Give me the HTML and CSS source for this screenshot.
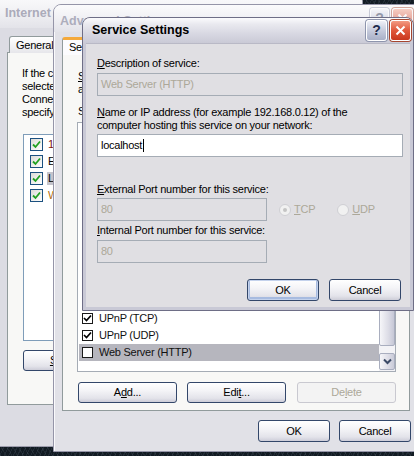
FILE: index.html
```html
<!DOCTYPE html>
<html lang="en">
<head>
<meta charset="utf-8">
<title>Service Settings</title>
<link rel="stylesheet" href="styles.css">
</head>
<body>
<div class="desk">

  <section class="win w1">
    <header class="tbar">
      <span class="ttl">Internet Gateway Properties</span>
    </header>
    <div class="wbody">
      <div class="tabs"><span class="tab">General</span></div>
      <div class="panel p1">
        <p class="txt">If the computer that hosts the gateway is running<br>selected services, Internet users can access them through the<br>Connection. Select the services or click Settings to<br>specify a custom service.</p>
        <div class="list1">
          <div class="r1"><span class="lchk"><svg width="9" height="9" viewBox="0 0 9 9"><path d="M1 4.5 L3.5 7 L8 1.5" fill="none" stroke="#21a121" stroke-width="1.8"/></svg></span><span class="l1 red">1394 Connection</span></div>
          <div class="r1"><span class="lchk"><svg width="9" height="9" viewBox="0 0 9 9"><path d="M1 4.5 L3.5 7 L8 1.5" fill="none" stroke="#21a121" stroke-width="1.8"/></svg></span><span class="l1">Ethernet Adapter</span></div>
          <div class="r1"><span class="lchk"><svg width="9" height="9" viewBox="0 0 9 9"><path d="M1 4.5 L3.5 7 L8 1.5" fill="none" stroke="#21a121" stroke-width="1.8"/></svg></span><span class="l1 hl">Local Area Connection</span></div>
          <div class="r1"><span class="lchk"><svg width="9" height="9" viewBox="0 0 9 9"><path d="M1 4.5 L3.5 7 L8 1.5" fill="none" stroke="#21a121" stroke-width="1.8"/></svg></span><span class="l1 org">Wireless Network Connection</span></div>
        </div>
        <div class="brow1"><button class="btn b1"><u>S</u>ettings...</button></div>
      </div>
    </div>
  </section>

  <section class="win w2">
    <header class="tbar">
      <span class="ttl">Advanced Settings</span>
      <span class="tbtns"><span class="tb help">?</span><span class="tb close"><svg width="11" height="11" viewBox="0 0 11 11"><path d="M1.5 1.5 L9.5 9.5 M9.5 1.5 L1.5 9.5" stroke="#fff" stroke-width="2"/></svg></span></span>
    </header>
    <div class="wbody">
      <div class="tabs"><span class="tab sel">Services</span></div>
      <div class="panel p2">
        <p class="txt"><u>S</u>elect the services running on your network that Internet users can<br>access.</p>
        <p class="txt svc">Services</p>
        <div class="list2">
          <div class="rows">
            <div class="r2"><span class="chk"><svg width="9" height="9" viewBox="0 0 9 9"><path d="M1 4 L3.5 6.5 L8 1.5" fill="none" stroke="#000" stroke-width="1.7"/></svg></span><span>FTP Server</span></div>
            <div class="r2"><span class="chk"></span><span>Internet Mail Access Protocol Version 3 (IMAP3)</span></div>
            <div class="r2"><span class="chk"></span><span>Internet Mail Access Protocol Version 4 (IMAP4)</span></div>
            <div class="r2"><span class="chk"></span><span>Internet Mail Server (SMTP)</span></div>
            <div class="r2"><span class="chk"></span><span>Post-Office Protocol Version 3 (POP3)</span></div>
            <div class="r2"><span class="chk"><svg width="9" height="9" viewBox="0 0 9 9"><path d="M1 4 L3.5 6.5 L8 1.5" fill="none" stroke="#000" stroke-width="1.7"/></svg></span><span>msmsgs (192.168.0.2:6891) TCP</span></div>
            <div class="r2"><span class="chk"><svg width="9" height="9" viewBox="0 0 9 9"><path d="M1 4 L3.5 6.5 L8 1.5" fill="none" stroke="#000" stroke-width="1.7"/></svg></span><span>msmsgs (192.168.0.2:7421) UDP</span></div>
            <div class="r2"><span class="chk"></span><span>Remote Desktop</span></div>
            <div class="r2"><span class="chk"></span><span>Secure Web Server (HTTPS)</span></div>
            <div class="r2"><span class="chk"></span><span>Telnet Server</span></div>
            <div class="r2"><span class="chk"></span><span>Terminal Services</span></div>
            <div class="r2"><span class="chk"><svg width="9" height="9" viewBox="0 0 9 9"><path d="M1 4 L3.5 6.5 L8 1.5" fill="none" stroke="#000" stroke-width="1.7"/></svg></span><span>UPnP (TCP)</span></div>
            <div class="r2"><span class="chk"><svg width="9" height="9" viewBox="0 0 9 9"><path d="M1 4 L3.5 6.5 L8 1.5" fill="none" stroke="#000" stroke-width="1.7"/></svg></span><span>UPnP (UDP)</span></div>
            <div class="r2 hl2"><span class="chk"></span><span>Web Server (HTTP)</span></div>
          </div>
          <div class="vscroll">
            <div class="thumb"></div>
            <div class="arrow"><svg width="9" height="7" viewBox="0 0 9 7"><path d="M1 1.5 L4.5 5 L8 1.5" fill="none" stroke="#3b4a66" stroke-width="2"/></svg></div>
          </div>
        </div>
        <div class="brow2">
          <button class="btn b2">A<u>d</u>d...</button>
          <button class="btn b2">Edi<u>t</u>...</button>
          <button class="btn b2 del" disabled>De<u>l</u>ete</button>
        </div>
      </div>
      <div class="brow3">
        <button class="btn b3">OK</button>
        <button class="btn b3">Cancel</button>
      </div>
    </div>
  </section>

  <section class="win w3">
    <header class="tbar">
      <span class="ttl">Service Settings</span>
      <span class="tbtns"><span class="tb help">?</span><span class="tb close"><svg width="11" height="11" viewBox="0 0 11 11"><path d="M1.5 1.5 L9.5 9.5 M9.5 1.5 L1.5 9.5" stroke="#fff" stroke-width="2"/></svg></span></span>
    </header>
    <div class="wbody dlg">
      <p class="lbl"><u>D</u>escription of service:</p>
      <div class="field dis wide f1">Web Server (HTTP)</div>
      <p class="lbl l2"><u>N</u>ame or IP address (for example 192.168.0.12) of the<br>computer hosting this service on your network:</p>
      <div class="field wide f2">localhost<span class="caret"></span></div>
      <p class="lbl l3"><u>E</u>xternal Port number for this service:</p>
      <div class="portrow">
        <div class="field dis short">80</div>
        <div class="radios">
          <span class="radio"><span class="rc on"></span><span class="rt"><u>T</u>CP</span></span>
          <span class="radio"><span class="rc"></span><span class="rt"><u>U</u>DP</span></span>
        </div>
      </div>
      <p class="lbl l4"><u>I</u>nternal Port number for this service:</p>
      <div class="field dis short f4">80</div>
      <div class="brow4">
        <button class="btn b3 def">OK</button>
        <button class="btn b3">Cancel</button>
      </div>
    </div>
  </section>

</div>
</body>
</html>
```
FILE: styles.css
```css
* { box-sizing: border-box; margin: 0; padding: 0; }
html, body { margin: 0; padding: 0; }
body {
  width: 414px; height: 456px; overflow: hidden;
  font-family: "Liberation Sans", Arial, sans-serif;
  font-size: 11px; letter-spacing: -0.25px; line-height: 13px; color: #000;
}
u { text-decoration: underline; text-underline-offset: 1px; }

.desk {
  position: relative; width: 414px; height: 456px; overflow: hidden;
  background-color: #121b23;
  background-image:
    repeating-linear-gradient(115deg, rgba(120,140,160,.14) 0 1px, transparent 1px 4px),
    repeating-linear-gradient(60deg, rgba(200,210,220,.08) 0 1px, transparent 1px 5px);
}

.win { position: absolute; display: flex; flex-direction: column; overflow: hidden; }
.tbar { flex: none; display: flex; align-items: center; justify-content: space-between; }
.ttl { font-weight: bold; font-size: 12.5px; letter-spacing: 0; white-space: nowrap; }
.tbtns { display: flex; gap: 3px; }
.tb {
  width: 21px; height: 21px; border-radius: 3px; border: 1px solid #fff;
  display: flex; align-items: center; justify-content: center;
}
.tb.help {
  background: linear-gradient(#eef0f7, #c3c8da 55%, #a9b0c7);
  color: #1f2d4d; font-weight: bold; font-size: 14px; letter-spacing: 0;
  box-shadow: 0 0 0 1px #8e95ad;
}
.tb.close {
  background: linear-gradient(#f29a82, #e0573a 50%, #c9371d);
  box-shadow: 0 0 0 1px #a6462f;
}
.wbody { flex: 1; display: flex; flex-direction: column; min-height: 0; }

.tabs { display: flex; height: 17px; position: relative; z-index: 1; flex: none; }
.tab {
  display: flex; align-items: center; padding: 0 6px; white-space: nowrap;
  border: 1px solid #919b9c; border-bottom: 0; border-radius: 3px 3px 0 0;
  background: linear-gradient(#ffffff, #f1f1f3 60%, #e6e6ea);
}
.tab.sel {
  background: #fcfcfe; border-top: 3px solid #f4a93b; height: 18px;
  margin-top: -1px;
}
.panel {
  flex: none; border: 1px solid #919b9c; background: #f8f8f6; margin-top: -1px;
  display: flex; flex-direction: column; align-items: flex-start;
}
.txt { white-space: nowrap; }

/* window 1 (back) */
.w1 {
  z-index: 1;
  left: -4px; top: -6px; width: 367px; height: 453px;
  border: 1px solid #9c9cac; border-radius: 0 8px 0 0; background: #dcdce3;
}
.w1 .tbar { height: 33px; padding: 4px 0 0 8px; background: linear-gradient(#fbfbfc, #f0f0f3 55%, #e3e3e9); }
.w1 .ttl { color: #ababba; }
.w1 .wbody { padding: 8px 0 0 10px; }
.w1 .tabs { padding-left: 2px; }
.p1 { width: 350px; height: 353px; padding: 14px 0 0 14px; }
.list1 {
  margin-top: 15px; margin-left: 1px; width: 320px; height: 207px;
  border: 1px solid #7f9db9; background: #fff; padding: 1px 0 0 6px;
}
.r1 { height: 17px; display: flex; align-items: center; gap: 4px; white-space: nowrap; }
.lchk {
  width: 13px; height: 13px; border: 1px solid #1c5180; flex: none;
  background: linear-gradient(135deg, #dcdcd7, #ffffff);
  display: flex; align-items: center; justify-content: center;
}
.l1 { padding: 0 1px; }
.l1.red { color: #7a1010; }
.l1.org { color: #b8700c; }
.l1.hl { background: #c4c4cc; }
.brow1 { margin-top: 9px; margin-left: 1px; }
.b1 { width: 100px; }

/* buttons */
.btn {
  font: inherit; letter-spacing: inherit; color: #000; height: 21px;
  border: 1px solid #33476a; border-radius: 3px;
  background: linear-gradient(#ffffff, #f4f4f7 40%, #e3e3ea 80%, #cdcdd8);
  display: flex; align-items: center; justify-content: center; flex: none;
}
.btn.def { box-shadow: inset 0 0 0 1px #c4d2ec, inset 0 -1px 0 2px #a7bbe0; }
.btn:disabled {
  border-color: #c9c9d0; color: #aca899;
  background: #f3f3f3;
}

/* window 2 (middle) */
.w2 {
  z-index: 2;
  left: 53px; top: 4px; width: 372px; height: 448px;
  border: 1px solid #9595a8; border-radius: 8px 8px 0 0; background: #e1e1e7;
  box-shadow: inset 1px 0 0 #fafafc;
}
.w2 .tbar { height: 27px; padding: 0 11px 0 6px; background: linear-gradient(#fbfbfc, #efeff3 55%, #e3e3e9); }
.w2 .ttl { color: #adadbc; margin-top: 5px; }
.w2 .tb { opacity: .45; }
.w2 .tb.help { width: 19px; }
.w2 .wbody { padding: 6px 12px 0 8px; }
.p2 { width: 348px; height: 357px; padding: 15px 0 0 14px; }
.p2 .txt { margin-left: 1px; }
.p2 .svc { margin-top: 9px; }
.list2 {
  margin-top: 4px; width: 319px; height: 250px;
  border: 1px solid #a5acb5; background: #fff; display: flex;
}
.rows { flex: 1; overflow: hidden; padding-left: 1px; }
.r2 { height: 17px; display: flex; align-items: center; gap: 6px; padding-left: 3px; white-space: nowrap; color: #111; }
.r2.hl2 { background: #b6b6be; }
.chk {
  width: 11px; height: 11px; border: 1px solid #1a1a1a; background: #fff; flex: none;
  display: flex; align-items: center; justify-content: center;
}
.vscroll {
  width: 16px; flex: none; display: flex; flex-direction: column;
  background: #f3f3f6; padding: 0 0 1px 0; gap: 7px;
}
.thumb {
  flex: 1; margin-top: 26px; border: 1px solid #a9aebf; border-radius: 2px;
  background: linear-gradient(90deg, #f6f6f9, #dcdce6 60%, #c6c8d6);
}
.arrow {
  height: 17px; border: 1px solid #a9aebf; border-radius: 2px;
  background: linear-gradient(90deg, #f6f6f9, #dcdce6 60%, #c9cbd8);
  display: flex; align-items: center; justify-content: center;
}
.brow2 { margin-top: 10px; margin-left: 1px; display: flex; gap: 10px; }
.b2 { width: 99px; }
.b2.del { margin-left: 1px; }
.brow3 { margin-top: 9px; display: flex; justify-content: flex-end; gap: 9px; padding-right: 1px; }
.b3 { width: 72px; height: 22px; }

/* window 3 (front dialog) */
.w3 {
  z-index: 3;
  left: 82px; top: 17px; width: 332px; height: 294px;
  border: 1px solid #6e6e86; border-radius: 8px 8px 0 0; background: #c9c9d6;
}
.w3 .tbar {
  height: 25px; padding: 0 2px 0 9px;
  background: linear-gradient(#fbfbfd, #e9e9ef 25%, #d9d9e3 60%, #cacad6);
}
.w3 .wbody { margin: 0 3px 3px; background: #e0dfe3; padding: 13px 7px 0 11px; border-top: 1px solid #b9b9c6; }
.lbl { white-space: nowrap; }
.field {
  height: 23px; border: 1px solid #a5acb5; background: #fff;
  padding: 0 3px; display: flex; align-items: center; white-space: nowrap;
}
.field.dis { background: #e0dfe3; color: #aca899; }
.wide { width: 306px; }
.short { width: 170px; flex: none; }
.f1 { margin-top: 3px; }
.l2 { margin-top: 10px; }
.f2 { margin-top: 2px; }
.caret { width: 1px; height: 13px; background: #000; margin-left: 1px; }
.l3 { margin-top: 26px; }
.portrow { margin-top: 2px; display: flex; align-items: center; }
.radios { display: flex; gap: 22px; margin-left: 12px; color: #aca899; }
.radio { display: flex; align-items: center; gap: 3px; }
.rc {
  width: 12px; height: 12px; border-radius: 50%; border: 1px solid #cfcfd4; background: #f1f1f1;
  display: flex; align-items: center; justify-content: center;
}
.rc.on::after { content: ""; width: 4px; height: 4px; border-radius: 50%; background: #c4c4c4; }
.l4 { margin-top: 3px; }
.f4 { margin-top: 3px; }
.brow4 { margin-top: 16px; display: flex; justify-content: flex-end; gap: 10px; padding-right: 2px; }
```
